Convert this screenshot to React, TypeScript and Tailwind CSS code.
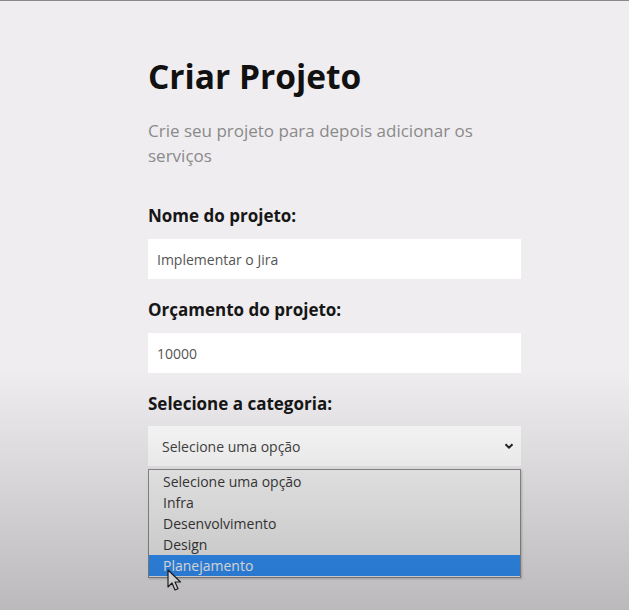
export default function App() {
  const options = ["Selecione uma opção", "Infra", "Desenvolvimento", "Design", "Planejamento"]

  return (
    <div className="relative min-h-[610px] overflow-hidden border-t border-[#8a8a8a] bg-[#efedf0] font-['Open_Sans',sans-serif]">
      <div className="ml-[148px] w-[373px] pt-[50px]">
        <h1 className="text-[33.5px] font-bold leading-[50px] text-[#111]">Criar Projeto</h1>
        <p className="mt-[17px] text-[17px] leading-[25px] text-[#8a8a8a]">
          Crie seu projeto para depois adicionar os serviços
        </p>

        <form className="mt-[36px] flex flex-col">
          <label className="text-[17px] font-bold leading-[24px] text-[#161616]">Nome do projeto:</label>
          <div className="mt-[11px] flex h-[40px] items-center bg-white px-[9px] text-[14px] text-[#555]">
            Implementar o Jira
          </div>

          <label className="mt-[19px] text-[17px] font-bold leading-[24px] text-[#161616]">
            Orçamento do projeto:
          </label>
          <div className="mt-[11px] flex h-[40px] items-center bg-white px-[9px] text-[14px] text-[#555]">
            10000
          </div>

          <label className="mt-[19px] text-[17px] font-bold leading-[24px] text-[#161616]">
            Selecione a categoria:
          </label>
          <div className="relative mt-[10px]">
            <div className="flex h-[40px] items-center justify-between bg-white pl-[14px] pr-[6px] text-[14px] text-[#444]">
              <span>Selecione uma opção</span>
              <svg width="12" height="12" viewBox="0 0 12 12" fill="none">
                <path d="M2.5 4.2 6 7.7 9.5 4.2" stroke="#222" strokeWidth="2" />
              </svg>
            </div>
            <ul className="absolute left-0 top-[43px] w-[373px] border border-[#8e8e8e] bg-[#f4f4f4] py-[1px] text-[14px] text-[#3a3a3a] shadow-[1px_1px_2px_rgba(0,0,0,0.2)]">
              {options.map((o, i) => (
                <li
                  key={o}
                  className={
                    i === 4
                      ? "h-[21px] bg-[#3394ff] pl-[14px] leading-[21px] text-white"
                      : "h-[21px] pl-[14px] leading-[21px]"
                  }
                >
                  {o}
                </li>
              ))}
            </ul>
            <svg className="absolute left-[19px] top-[143px]" width="14" height="22" viewBox="0 0 14 22">
              <path d="M1 1v17l4-4 3 7 3-1.3-3-6.7h5.5z" fill="#fff" stroke="#222" strokeWidth="1.2" strokeLinejoin="round" />
            </svg>
          </div>
        </form>
      </div>

      <div className="pointer-events-none absolute inset-x-0 bottom-0 h-[240px] bg-gradient-to-b from-[rgba(0,0,0,0)] to-[rgba(0,0,0,0.22)]" />
    </div>
  )
}
